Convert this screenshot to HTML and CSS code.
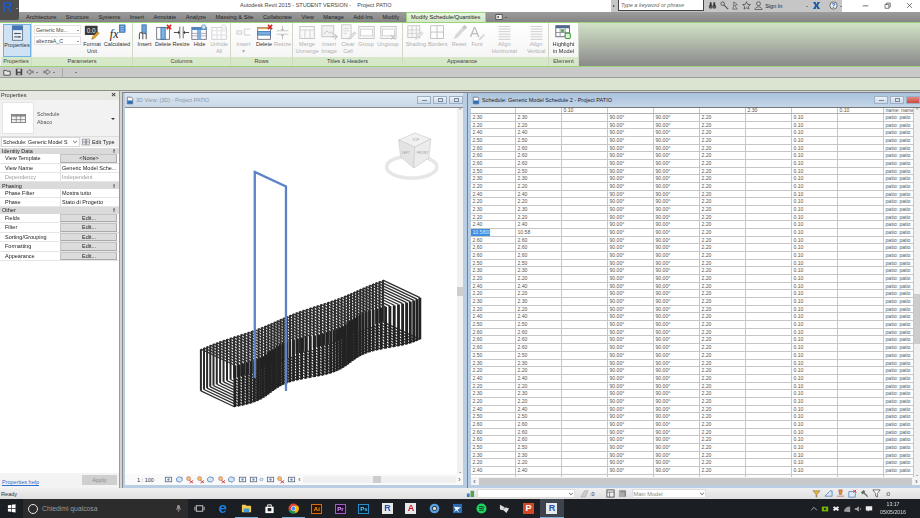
FILE: index.html
```html
<!DOCTYPE html>
<html lang="en">
<head>
<meta charset="utf-8">
<title>Autodesk Revit 2015 - Project PATIO</title>
<link rel="stylesheet" href="styles.css">
</head>
<body>
<svg class="sprite" aria-hidden="true">
  <symbol id="i-doc" viewBox="0 0 12 12"><path d="M2 1h6l2 2v8H2z" fill="#fff" stroke="#556"/><rect x="2" y="6" width="8" height="5" fill="#2f6fb5"/></symbol>
  <symbol id="i-props" viewBox="0 0 20 20"><rect x="4" y="1" width="12" height="17" fill="#e8eef5" stroke="#5b6f85"/><rect x="4" y="1" width="12" height="5" fill="#3f78b5"/><path d="M6 10h8M6 14h8" stroke="#333"/><path d="M8 9v2M12 13v2" stroke="#2a6ab0" stroke-width="1.5"/></symbol>
  <symbol id="i-fmt" viewBox="0 0 20 20"><rect x="1" y="2" width="15" height="11" rx="1" fill="#3a3a3a"/><text x="8.5" y="10.5" font-size="7.5" fill="#eee" text-anchor="middle" font-family="Liberation Sans">0.0</text><path d="M9 18l1-3 6-6 2 2-6 6z" fill="#e0a030" stroke="#8a5a10" stroke-width=".5"/></symbol>
  <symbol id="i-calc" viewBox="0 0 20 20"><text x="1" y="16" font-size="14" font-style="italic" fill="#222" font-family="Liberation Serif">fx</text><rect x="12" y="1" width="7" height="9" fill="#4a8ac8" stroke="#2a5a90" stroke-width=".5"/><path d="M13.5 3h4M13.5 5.5h4M13.5 8h4" stroke="#fff" stroke-width=".6"/></symbol>
  <symbol id="i-colins" viewBox="0 0 20 20"><rect x="7" y="1" width="5" height="10" fill="#6aa5de" stroke="#3a6ea5"/><path d="M4 18v-6a2 2 0 0 1 4 0v6M12 18v-6a2 2 0 0 0-2-1" fill="none" stroke="#555" stroke-width="1.2"/></symbol>
  <symbol id="i-coldel" viewBox="0 0 20 20"><rect x="2" y="4" width="15" height="14" fill="#fff" stroke="#667"/><rect x="7" y="4" width="5" height="14" fill="#7fb2e5" stroke="#3a6ea5"/><path d="M14 1l5 5M19 1l-5 5" stroke="#d8261c" stroke-width="1.8"/></symbol>
  <symbol id="i-colres" viewBox="0 0 20 20"><path d="M8 3v14M12 3v14" stroke="#555"/><path d="M1 10h5M19 10h-5" stroke="#333"/><path d="M6 8v4l2-2zM14 8v4l-2-2z" fill="#222"/></symbol>
  <symbol id="i-colhide" viewBox="0 0 20 20"><rect x="1" y="4" width="17" height="14" fill="#fff" stroke="#667"/><rect x="1" y="4" width="17" height="3" fill="#4a86c5"/><rect x="7" y="7" width="5" height="11" fill="#7fb2e5"/><path d="M1 11h17M1 14h17" stroke="#99a"/><circle cx="15" cy="3.5" r="2.6" fill="#cfe3f6" stroke="#6a9ac8"/></symbol>
  <symbol id="i-colun" viewBox="0 0 20 20"><rect x="1" y="4" width="17" height="14" fill="#fff" stroke="#778"/><path d="M1 8h17M7 4v14M12 4v14M1 13h17" stroke="#99a"/><circle cx="15" cy="3.5" r="2.6" fill="#eee" stroke="#999"/></symbol>
  <symbol id="i-rowins" viewBox="0 0 20 20"><path d="M2 8h6v4H2zM11 6h7M11 13h7M11 6v7" fill="#ddd" stroke="#777"/></symbol>
  <symbol id="i-rowdel" viewBox="0 0 20 20"><rect x="2" y="4" width="15" height="14" fill="#fff" stroke="#667"/><rect x="2" y="9" width="15" height="4" fill="#7fb2e5" stroke="#3a6ea5"/><rect x="2" y="4" width="15" height="2" fill="#d9a860"/><path d="M14 1l5 5M19 1l-5 5" stroke="#d8261c" stroke-width="1.8"/></symbol>
  <symbol id="i-rowres" viewBox="0 0 20 20"><path d="M3 8h14M3 12h14" stroke="#555"/><path d="M10 2v4M10 18v-4" stroke="#333"/><path d="M8 6h4l-2 2zM8 14h4l-2-2z" fill="#222"/></symbol>
  <symbol id="i-merge" viewBox="0 0 20 20"><rect x="1" y="3" width="17" height="14" fill="#f4f4f4" stroke="#555"/><path d="M1 7h17M7 7v10M13 7v10" stroke="#777"/></symbol>
  <symbol id="i-insimg" viewBox="0 0 20 20"><rect x="1" y="2" width="14" height="13" fill="#ddd" stroke="#555"/><path d="M3 12l4-4 3 3 2-2 2 3" fill="none" stroke="#555"/><path d="M12 15h7M16 12l3 3-3 3" fill="none" stroke="#555" stroke-width="1.3"/></symbol>
  <symbol id="i-clear" viewBox="0 0 20 20"><rect x="2" y="1" width="11" height="16" fill="#eee" stroke="#555"/><path d="M4 5h7M4 8h7M4 11h4" stroke="#777"/><path d="M10 18l2-4 5-5 2 2-5 5z" fill="#aaa" stroke="#555" stroke-width=".6"/></symbol>
  <symbol id="i-group" viewBox="0 0 20 20"><rect x="1" y="3" width="18" height="14" fill="#f4f4f4" stroke="#555"/><rect x="3" y="6" width="14" height="8" fill="#fff" stroke="#777"/></symbol>
  <symbol id="i-ungroup" viewBox="0 0 20 20"><rect x="1" y="3" width="18" height="14" fill="#f4f4f4" stroke="#555"/><rect x="3" y="6" width="14" height="8" fill="#fff" stroke="#777"/><path d="M13 13l5 5M18 13l-5 5" stroke="#555" stroke-width="1.2"/></symbol>
  <symbol id="i-shade" viewBox="0 0 20 20"><rect x="1" y="2" width="14" height="14" fill="#f2f2f2" stroke="#555"/><path d="M1 7h14M1 11h14M6 2v14M11 2v14" stroke="#777"/><path d="M10 18l2-4 5-5 2 2-5 5z" fill="#bbb" stroke="#555" stroke-width=".6"/></symbol>
  <symbol id="i-border" viewBox="0 0 20 20"><rect x="2" y="2" width="15" height="15" fill="#fff" stroke="#444"/><path d="M2 9.5h15M9.5 2v15" stroke="#444"/></symbol>
  <symbol id="i-reset" viewBox="0 0 20 20"><path d="M3 18l2-5 8-9 3 3-8 9z" fill="#999"/><path d="M13 4l3-3 3 3-3 3z" fill="#666"/></symbol>
  <symbol id="i-font" viewBox="0 0 20 20"><text x="1" y="15" font-size="17" fill="#444" font-family="Liberation Sans">A</text><path d="M11 18l6-6 2 1-6 6z" fill="#999"/></symbol>
  <symbol id="i-align" viewBox="0 0 20 20"><path d="M3 3h14M3 6h14M3 9h14M3 12h14M3 15h14M3 18h14" stroke="#666"/></symbol>
  <symbol id="i-high" viewBox="0 0 20 20"><rect x="1" y="2" width="16" height="13" fill="#fff" stroke="#556"/><rect x="1" y="2" width="16" height="3" fill="#4a6a90"/><path d="M1 10h16M6 5v10M12 5v10" stroke="#889"/><rect x="7" y="6" width="4" height="4" fill="#5fb35f"/><rect x="12" y="11" width="6" height="6" rx="1" fill="#dff0d8" stroke="#3e9e3e" stroke-width="1.2"/></symbol>
  <symbol id="i-table" viewBox="0 0 20 12"><rect x=".5" y=".5" width="19" height="11" fill="#f4f4f4" stroke="#666"/><rect x=".5" y=".5" width="19" height="3" fill="#8d8d8d"/><path d="M.5 7.5h19M7 .5v11M13 .5v11" stroke="#777"/></symbol>
  <symbol id="i-mini" viewBox="0 0 10 10"><rect x="1.500" y="2.500" width="7" height="5" fill="none" stroke="#5a6a80" stroke-width=".9"/><circle cx="5" cy="5" r="1.300" fill="#6d92bf"/></symbol>
  <symbol id="i-mini2" viewBox="0 0 10 10"><path d="M1.500 4l2.500-2 4 1v3L6 8 2 7z" fill="#dbe6f2" stroke="#3f76b8" stroke-width=".8"/></symbol>
  <symbol id="i-red" viewBox="0 0 10 10"><circle cx="4" cy="4" r="2.300" fill="#eec36a" stroke="#a57" stroke-width=".5"/><path d="M5 6l4 3M9 6l-4 3" stroke="#c22" stroke-width=".9"/></symbol>
  <symbol id="i-filter" viewBox="0 0 10 10"><path d="M1 1h8L6 5v4L4 8V5z" fill="#fff" stroke="#444" stroke-width=".8"/></symbol>
  <symbol id="i-file" viewBox="0 0 10 10"><path d="M1 3h3l1 1h4v5H1z" fill="#e8e8e8" stroke="#333"/></symbol>
  <symbol id="i-save" viewBox="0 0 10 10"><rect x="1" y="1" width="8" height="8" fill="#444"/><rect x="3" y="1.5" width="4" height="3" fill="#ddd"/><rect x="3" y="6" width="4" height="3" fill="#aaa"/></symbol>
  <symbol id="i-undo" viewBox="0 0 10 10"><path d="M1 5l4-3v2h4v2H5v2z" fill="#ddd" stroke="#444" stroke-width=".8"/></symbol>
  <symbol id="i-redo" viewBox="0 0 10 10"><path d="M9 5L5 2v2H1v2h4v2z" fill="#ddd" stroke="#444" stroke-width=".8"/></symbol>
</svg>

<div class="app">
  <div class="app-button"><span class="app-r">R</span><span class="app-caret"></span></div>

  <header class="titlebar">
    <div class="title-text">Autodesk Revit 2015 - STUDENT VERSION - &nbsp; &nbsp;Project PATIO</div>
    <div class="infocenter">
      <span class="ic-arrow"></span>
      <span class="ic-search">Type a keyword or phrase</span>
      <svg class="ic-icon" viewBox="0 0 10 10"><circle cx="3" cy="6.5" r="2.2" fill="#555"/><circle cx="7" cy="6.5" r="2.2" fill="#555"/><rect x="2" y="1.5" width="2" height="4" fill="#333"/><rect x="6" y="1.5" width="2" height="4" fill="#333"/></svg>
      <svg class="ic-icon" viewBox="0 0 10 10"><circle cx="3" cy="3" r="2" fill="none" stroke="#555"/><path d="M4.5 4.5L9 9" stroke="#555" stroke-width="1.2"/></svg>
      <svg class="ic-icon" viewBox="0 0 10 10"><path d="M3 1l4 3-3 1 3 4H2l1-4z" fill="none" stroke="#555" stroke-width=".8"/></svg>
      <svg class="ic-icon" viewBox="0 0 10 10"><path d="M5 .8l1.3 2.9 3 .3-2.3 2 .7 3L5 7.500 2.300 9l.7-3-2.300-2 3-.3z" fill="none" stroke="#444" stroke-width=".8"/></svg>
      <svg class="ic-icon ic-user" viewBox="0 0 10 10"><circle cx="5" cy="3" r="2.200" fill="none" stroke="#444" stroke-width=".8"/><path d="M1 9.500c.5-4 7.500-4 8 0z" fill="none" stroke="#444" stroke-width=".8"/></svg>
      <span class="ic-sign">Sign In</span>
      <span class="ic-down"></span>
      <svg class="ic-icon ic-x" viewBox="0 0 10 10"><path d="M1 1h3l1 3 1-3h3L6.500 5 9 9H6L5 6 4 9H1l2.500-4z" fill="#1d5aa8"/></svg>
      <svg class="ic-icon ic-help" viewBox="0 0 10 10"><circle cx="5" cy="5" r="4" fill="#e8f0f8" stroke="#444" stroke-width=".8"/><text x="5" y="7.500" font-size="7" font-weight="700" fill="#1d5aa8" text-anchor="middle" font-family="Liberation Sans">?</text></svg>
      <span class="ic-down"></span>
    </div>
    <div class="win-controls">
      <svg class="win-btn" viewBox="0 0 10 10"><path d="M1 5.500h8" stroke="#333"/></svg>
      <svg class="win-btn" viewBox="0 0 10 10"><path d="M1.500 3.500h5.500v5.500H1.500zM3.500 3.500V1.500H9v5.500H7" fill="none" stroke="#333" stroke-width=".9"/></svg>
      <svg class="win-btn" viewBox="0 0 10 10"><path d="M1.500 1.500l7 7M8.500 1.500l-7 7" stroke="#333" stroke-width=".9"/></svg>
    </div>
  </header>

  <nav class="tabs">
    <span class="tab">Architecture</span>
    <span class="tab">Structure</span>
    <span class="tab">Systems</span>
    <span class="tab">Insert</span>
    <span class="tab">Annotate</span>
    <span class="tab">Analyze</span>
    <span class="tab">Massing &amp; Site</span>
    <span class="tab">Collaborate</span>
    <span class="tab">View</span>
    <span class="tab">Manage</span>
    <span class="tab">Add-Ins</span>
    <span class="tab">Modify</span>
    <span class="tab tab-active">Modify Schedule/Quantities</span>
    <span class="tab-extra"><svg class="tab-extra-icon" viewBox="0 0 10 10"><rect x="1" y="2" width="8" height="6" fill="#eee" stroke="#444"/><rect x="3" y="4" width="2" height="2" fill="#444"/></svg><i class="tab-caret"></i></span>
  </nav>

  <section class="ribbon">
    <div class="panel p-properties">
      <div class="panel-body">
        <div class="btn btn-on w-prop"><svg class="ri"><use href="#i-props"/></svg><span>Properties</span></div>
      </div>
      <div class="panel-label">Properties</div>
    </div>
    <div class="panel p-parameters">
      <div class="panel-body">
        <div class="combos">
          <div class="r-combo"><span>Generic Mo...</span><i class="mini-caret"></i></div>
          <div class="r-combo"><span>altezzaA_C</span><i class="mini-caret"></i></div>
        </div>
        <div class="btn w-20"><svg class="ri"><use href="#i-fmt"/></svg><span>Format<br>Unit</span></div>
        <div class="btn w-30"><svg class="ri"><use href="#i-calc"/></svg><span>Calculated</span></div>
      </div>
      <div class="panel-label">Parameters</div>
    </div>
    <div class="panel p-columns">
      <div class="panel-body">
        <div class="btn w-19"><svg class="ri"><use href="#i-colins"/></svg><span>Insert</span></div>
        <div class="btn w-18"><svg class="ri"><use href="#i-coldel"/></svg><span>Delete</span></div>
        <div class="btn w-18"><svg class="ri"><use href="#i-colres"/></svg><span>Resize</span></div>
        <div class="btn w-19"><svg class="ri"><use href="#i-colhide"/></svg><span>Hide</span></div>
        <div class="btn w-20 off"><svg class="ri"><use href="#i-colun"/></svg><span>Unhide<br>All</span></div>
      </div>
      <div class="panel-label">Columns</div>
    </div>
    <div class="panel p-rows">
      <div class="panel-body">
        <div class="btn w-21 off"><svg class="ri"><use href="#i-rowins"/></svg><span>Insert<br>▾</span></div>
        <div class="btn w-20"><svg class="ri"><use href="#i-rowdel"/></svg><span>Delete</span></div>
        <div class="btn w-17 off"><svg class="ri"><use href="#i-rowres"/></svg><span>Resize</span></div>
      </div>
      <div class="panel-label">Rows</div>
    </div>
    <div class="panel p-titles">
      <div class="panel-body">
        <div class="btn w-24 off"><svg class="ri"><use href="#i-merge"/></svg><span>Merge<br>Unmerge</span></div>
        <div class="btn w-20 off"><svg class="ri"><use href="#i-insimg"/></svg><span>Insert<br>Image</span></div>
        <div class="btn w-18 off"><svg class="ri"><use href="#i-clear"/></svg><span>Clear<br>Cell</span></div>
        <div class="btn w-18 off"><svg class="ri"><use href="#i-group"/></svg><span>Group</span></div>
        <div class="btn w-26 off"><svg class="ri"><use href="#i-ungroup"/></svg><span>Ungroup</span></div>
      </div>
      <div class="panel-label">Titles &amp; Headers</div>
    </div>
    <div class="panel p-appearance">
      <div class="panel-body">
        <div class="btn w-22 off"><svg class="ri"><use href="#i-shade"/></svg><span>Shading</span></div>
        <div class="btn w-22 off"><svg class="ri"><use href="#i-border"/></svg><span>Borders</span></div>
        <div class="btn w-21 off"><svg class="ri"><use href="#i-reset"/></svg><span>Reset</span></div>
        <div class="btn w-15 off"><svg class="ri"><use href="#i-font"/></svg><span>Font</span></div>
        <div class="btn w-40 off"><svg class="ri"><use href="#i-align"/></svg><span>Align<br>Horizontal</span></div>
        <div class="btn w-24 off"><svg class="ri"><use href="#i-align"/></svg><span>Align<br>Vertical</span></div>
      </div>
      <div class="panel-label panel-label-left">Appearance</div>
    </div>
    <div class="panel p-element">
      <div class="panel-body">
        <div class="btn w-30"><svg class="ri"><use href="#i-high"/></svg><span>Highlight<br>in Model</span></div>
      </div>
      <div class="panel-label">Element</div>
    </div>
    <div class="ribbon-fill"></div>
  </section>

  <div class="qat">
    <svg class="qi"><use href="#i-file"/></svg>
    <svg class="qi"><use href="#i-save"/></svg>
    <svg class="qi"><use href="#i-undo"/></svg><i class="qat-caret"></i>
    <svg class="qi"><use href="#i-redo"/></svg><i class="qat-caret"></i>
    <span class="qat-sep"></span>
    <i class="qat-caret qat-last"></i>
  </div>
  <div class="optionsbar"></div>

  <main class="workspace">
    <aside class="props">
      <div class="props-head"><span>Properties</span><span class="props-x">×</span></div>
      <div class="type-sel">
        <div class="thumb"><svg class="thumb-icon"><use href="#i-table"/></svg></div>
        <div class="type-text">Schedule<br>Abaco</div>
        <i class="type-caret"></i>
      </div>
      <div class="inst-row">
        <div class="inst-combo"><span>Schedule: Generic Model S</span><i class="chev"></i></div>
        <div class="edit-type"><svg class="edit-icon" viewBox="0 0 10 10"><path d="M.5 1.500h4v7h-4zM5.500 1.500h4v7h-4zM.5 4h4M.5 6h4M5.500 4h4M5.500 6h4" fill="#fff" stroke="#667" stroke-width=".7"/></svg>Edit Type</div>
      </div>
      <div class="plist">
        <div class="sec"><span>Identity Data</span><b>⇑</b></div>
        <div class="prow"><span>View Template</span><span class="pval pbtn">&lt;None&gt;</span></div>
        <div class="prow"><span>View Name</span><span class="pval">Generic Model Sche...</span></div>
        <div class="prow pdis"><span>Dependency</span><span class="pval">Independent</span></div>
        <div class="sec"><span>Phasing</span><b>⇑</b></div>
        <div class="prow"><span>Phase Filter</span><span class="pval">Mostra tutto</span></div>
        <div class="prow"><span>Phase</span><span class="pval">Stato di Progetto</span></div>
        <div class="sec"><span>Other</span><b>⇑</b></div>
        <div class="prow"><span>Fields</span><span class="pval pbtn">Edit...</span></div>
        <div class="prow"><span>Filter</span><span class="pval pbtn">Edit...</span></div>
        <div class="prow"><span>Sorting/Grouping</span><span class="pval pbtn">Edit...</span></div>
        <div class="prow"><span>Formatting</span><span class="pval pbtn">Edit...</span></div>
        <div class="prow"><span>Appearance</span><span class="pval pbtn">Edit...</span></div>
      </div>
      <div class="props-foot"><a class="props-help">Properties help</a><span class="apply">Apply</span></div>
    </aside>

    <section class="win win-3d">
      <div class="win-title win-title-dim">
        <svg class="win-doc"><use href="#i-doc"/></svg><span>3D View: {3D} - Project PATIO</span>
        <div class="win-btns"><i class="wb"><em class="wb-min"></em></i><i class="wb"><em class="wb-res"></em></i><i class="wb"><em class="wb-res"></em></i></div>
      </div>
      <div class="win-body">
        <div class="canvas3d">
          <svg class="model" viewBox="126 107 330 366" preserveAspectRatio="none">
            <g id="fins"></g>
            <path d="M255 377V171L286 185.500V390" fill="none" stroke="#5d82c8" stroke-width="2.300"/>
            <g class="cube">
              <ellipse cx="411" cy="166" rx="25" ry="11" fill="none" stroke="#e6e6e6" stroke-width="3.500"/>
              <path d="M398 139l16-7 16 6-16 8z" fill="#f1f1f1" stroke="#c8c8c8" stroke-width=".6"/>
              <path d="M398 139l16 7-1 21-13-11z" fill="#e4e4e4" stroke="#c8c8c8" stroke-width=".6"/>
              <path d="M414 146l16-8-2 19-15 10z" fill="#ececec" stroke="#c8c8c8" stroke-width=".6"/>
              <text x="415" y="140" class="cube-t">TOP</text>
              <text x="405" y="153" class="cube-t">LEFT</text>
              <text x="422" y="153" class="cube-t">FRONT</text>
            </g>
          </svg>
          <div class="vscroll"><i class="up">⌃</i><i class="vthumb vthumb-3d"></i><i class="dn">⌄</i></div>
        </div>
        <div class="viewbar">
          <span class="scale">1 : 100</span>
          <div class="vb-icons">
            <svg class="vi"><use href="#i-mini"/></svg><svg class="vi"><use href="#i-mini2"/></svg><svg class="vi"><use href="#i-red"/></svg><svg class="vi"><use href="#i-red"/></svg><svg class="vi"><use href="#i-mini2"/></svg><svg class="vi"><use href="#i-red"/></svg><svg class="vi"><use href="#i-mini2"/></svg><svg class="vi"><use href="#i-mini"/></svg><svg class="vi"><use href="#i-mini"/></svg><svg class="vi vi-small"><use href="#i-mini2"/></svg><svg class="vi"><use href="#i-mini"/></svg><svg class="vi"><use href="#i-red"/></svg><svg class="vi"><use href="#i-mini"/></svg>
          </div>
          <span class="hs-arrow">‹</span>
          <div class="vb-track"><i class="vb-thumb"></i></div>
          <span class="hs-arrow">›</span>
        </div>
      </div>
    </section>

    <section class="win win-sched">
      <div class="win-title">
        <svg class="win-doc"><use href="#i-doc"/></svg><span>Schedule: Generic Model Schedule 2 - Project PATIO</span>
        <div class="win-btns"><i class="wb"><em class="wb-min"></em></i><i class="wb"><em class="wb-res"></em></i><i class="wb wb-close"></i></div>
      </div>
      <div class="sched-body">
        <div class="sched-main">
          <div class="sched-table" id="rows">
            <div class="srow shead"><span></span><span></span><span>0.10</span><span></span><span></span><span></span><span>2.30</span><span></span><span>0.10</span><span>name: name</span></div>
          </div>
          <div class="vscroll vscroll-s"><i class="up">⌃</i><i class="vthumb vthumb-s"></i><i class="dn">⌄</i></div>
        </div>
        <div class="hscroll"><span class="hs-arrow">‹</span><div class="hs-track"></div><span class="hs-arrow">›</span></div>
      </div>
    </section>
  </main>

  <footer class="status">
    <span class="ready">Ready</span>
    <svg class="st-icon st-first" viewBox="0 0 10 10"><rect x="1" y="5" width="3" height="4" fill="#3a7ac0"/><rect x="5" y="2" width="4" height="7" fill="#5aa05a"/></svg>
    <div class="st-combo st-wide"><i class="chev"></i></div>
    <svg class="st-icon st-gap" viewBox="0 0 10 10"><path d="M1 9l4-7 4 0-3 7z" fill="#ccc" stroke="#999" stroke-width=".5"/></svg>
    <span class="st-num">:0</span>
    <svg class="st-icon st-gap2" viewBox="0 0 10 10"><rect x="1" y="1" width="8" height="8" fill="#eee" stroke="#555"/><path d="M1 3.500h8M4 3.500v5.500" stroke="#555" stroke-width=".7"/></svg>
    <svg class="st-icon st-gap3" viewBox="0 0 10 10"><rect x="1" y="1" width="8" height="8" fill="#aaa"/><path d="M3 3h5v5" fill="none" stroke="#777"/></svg>
    <div class="st-combo st-model"><span>Main Model</span><i class="chev"></i></div>
    <div class="st-right">
      <svg class="st-icon" viewBox="0 0 10 10"><path d="M1 2h8L5.500 6v3h-1V6z" fill="#e8b830" stroke="#766" stroke-width=".6"/></svg>
      <svg class="st-icon" viewBox="0 0 10 10"><path d="M1 8l6-6 2 0v6z" fill="#dfe8f4" stroke="#2a68b0" stroke-width=".7"/></svg>
      <svg class="st-icon" viewBox="0 0 10 10"><path d="M3 1h4l-1 5H4zM1 8h8" fill="#e89030" stroke="#a55" stroke-width=".7"/></svg>
      <svg class="st-icon" viewBox="0 0 10 10"><rect x="1" y="3" width="7" height="6" fill="#dfe8f4" stroke="#2a68b0" stroke-width=".7"/><path d="M6 1l3 3M9 1L6 4" stroke="#d22" stroke-width="1"/></svg>
      <svg class="st-icon" viewBox="0 0 10 10"><path d="M1 4l3-3 2 2-1 1 4 4-1 1-4-4-1 1z" fill="#666"/></svg>
      <svg class="st-icon" viewBox="0 0 10 10"><use href="#i-filter"/></svg><span class="st-num">:0</span>
    </div>
  </footer>

  <div class="taskbar">
    <div class="tb-start"><svg class="tb-win" viewBox="0 0 10 10"><path d="M1 1.500l3.500-.5v3.500H1zM5.200.9L9.500.3v4.200H5.200zM1 5.200h3.500v3.500L1 8.200zM5.200 5.200h4.300v4.200l-4.300-.6z" fill="#fff"/></svg></div>
    <div class="tb-search"><i class="cortana"></i><span>Chiedimi qualcosa</span><svg class="tb-mic" viewBox="0 0 10 10"><rect x="3.500" y="1" width="3" height="5" rx="1.500" fill="#999"/><path d="M2.500 4.500a2.500 2.500 0 0 0 5 0M5 7v2" fill="none" stroke="#999" stroke-width=".7"/></svg></div>
    <div class="tb-item"><svg class="tb-icon" viewBox="0 0 12 12"><rect x="2.500" y="3" width="7" height="6" fill="none" stroke="#ccc"/><path d="M1 4v4M11 4v4" stroke="#ccc"/></svg></div>
    <div class="tb-item"><span class="tb-edge">e</span></div>
    <div class="tb-item tb-open"><svg class="tb-icon" viewBox="0 0 12 12"><path d="M1 2h4l1 1h5v7H1z" fill="#f2c94c"/><rect x="3" y="6" width="6" height="4" fill="#3f9ad6"/></svg></div>
    <div class="tb-item"><svg class="tb-icon" viewBox="0 0 12 12"><path d="M1.500 4h9v7h-9z" fill="#fff"/><path d="M4 4V2h4v2" fill="none" stroke="#fff"/><rect x="4" y="5.500" width="4" height="3.500" fill="#222"/></svg></div>
    <div class="tb-item tb-open"><svg class="tb-icon" viewBox="0 0 12 12"><circle cx="6" cy="6" r="5.500" fill="#db4437"/><path d="M6 6L1 8.800A5.500 5.500 0 0 0 8 11.200z" fill="#0f9d58"/><path d="M6 3h5a5.500 5.500 0 0 1-3 8.200z" fill="#f4b400"/><circle cx="6" cy="6" r="2.400" fill="#4285f4" stroke="#fff" stroke-width=".7"/></svg></div>
    <div class="tb-item"><span class="tb-app tb-ai">Ai</span></div>
    <div class="tb-item"><span class="tb-app tb-pr">Pr</span></div>
    <div class="tb-item"><span class="tb-app tb-ps">Ps</span></div>
    <div class="tb-item"><span class="tb-tile tb-r">R</span></div>
    <div class="tb-item"><span class="tb-tile tb-a">A</span></div>
    <div class="tb-item"><svg class="tb-icon" viewBox="0 0 12 12"><circle cx="6" cy="6" r="4" fill="none" stroke="#5aa0e0" stroke-width="2.600"/><circle cx="6" cy="6" r="1.800" fill="#ddd"/></svg></div>
    <div class="tb-item"><svg class="tb-icon" viewBox="0 0 12 12"><rect x="1" y="1" width="10" height="10" fill="#2a6ab0"/><path d="M2 4l8 1-4 2 2 4-3-3-3 2 2-3z" fill="#fff"/></svg></div>
    <div class="tb-item"><svg class="tb-icon" viewBox="0 0 12 12"><circle cx="6" cy="6" r="5.500" fill="#1ed760"/><path d="M3 4.300c2-.6 4.500-.4 6.200.6M3.400 6.200c1.700-.5 3.700-.3 5.200.5M3.800 8c1.400-.4 3-.2 4.200.4" fill="none" stroke="#111" stroke-width=".9"/></svg></div>
    <div class="tb-item"><svg class="tb-icon" viewBox="0 0 12 12"><path d="M1 2l4 2 6 2-3 5-3-3-4-1z" fill="#ddd"/><path d="M5 6l4-3" stroke="#333"/></svg></div>
    <div class="tb-item"><span class="tb-tile tb-p">P</span></div>
    <div class="tb-item tb-active"><span class="tb-tile tb-r">R</span></div>
    <div class="tb-tray">
      <svg class="tray" viewBox="0 0 10 10"><path d="M1.500 6.500L5 3l3.500 3.500" fill="none" stroke="#ccc"/></svg>
      <svg class="tray" viewBox="0 0 10 10"><rect x="1" y="2" width="8" height="6" fill="#76b900"/><circle cx="5" cy="5" r="1.500" fill="#234"/></svg>
      <svg class="tray" viewBox="0 0 10 10"><path d="M1 3l2-1.500L5 3 7 1.500 9 3 7 4.500 9 6 7 7.500 5 6 3 7.500 1 6l2-1.500z" fill="#eee"/></svg>
      <svg class="tray" viewBox="0 0 10 10"><path d="M1 8a8 8 0 0 1 8-6v7z" fill="#999"/></svg>
      <svg class="tray" viewBox="0 0 10 10"><path d="M1 4h2l3-2.500v7L3 6H1z" fill="#aaa"/><path d="M7.500 3.500c1 1 1 2 0 3" fill="none" stroke="#aaa"/></svg>
      <svg class="tray" viewBox="0 0 10 10"><path d="M1 1.500h8v5.500H5L3.500 8.500V7H1z" fill="#eee"/></svg>
      <div class="clock"><span>13:17</span><span>05/05/2016</span></div>
    </div>
  </div>
</div>
<script src="app.js"></script>
</body>
</html>
```

FILE: styles.css
```css
* { box-sizing: border-box; }
html, body { margin: 0; padding: 0; background: #fff; }
.sprite { display: none; }
.app {
  position: relative; width: 920px; height: 518px; overflow: hidden;
  display: flex; flex-direction: column;
  font-family: "Liberation Sans", Arial, sans-serif; font-size: 5.8px; color: #333;
  filter: blur(.3px);
}
.app > * { min-height: 0; }
i, em { font-style: normal; display: block; }

/* app button */
.app-button { position: absolute; left: 0; top: 0; width: 19px; height: 20px; background: #4d4d4d; z-index: 3; border-bottom-right-radius: 2px; }
.app-r { position: absolute; left: 3px; top: 0; font: 700 14px/15px "Liberation Sans", sans-serif; color: #2456b8; }
.app-caret { position: absolute; right: 1px; top: 8px; border: 1.500px solid transparent; border-top-color: #ddd; }

/* title bar */
.titlebar { flex: 0 0 12px; display: flex; background: #fff; }
.title-text { flex: 0 0 611px; padding-left: 240px; font-size: 5.500px; line-height: 11px; white-space: nowrap; color: #444; }
.infocenter { flex: 0 0 230px; height: 11.500px; display: flex; align-items: center; background: #c6c6c6; }
.ic-arrow { width: 7px; border: 1.500px solid transparent; border-left: 2px solid #333; margin-left: 2px; flex: 0 0 5px; }
.ic-search { width: 86px; height: 11px; margin-right: 2px; padding-left: 2px; background: #fff; border: 1px solid #444; border-top: 0; font: italic 5.500px/10px "Liberation Sans", sans-serif; color: #666; }
.ic-icon { width: 9px; height: 9px; margin-left: 2.300px; }
.ic-user { margin-left: 3px; }
.ic-sign { margin-left: 2px; width: 24px; font-weight: 400; color: #222; font-size: 5.500px; }
.ic-down { border: 1.500px solid transparent; border-top-color: #444; margin: 2px 0 0 17px; }
.ic-x { margin-left: 4px; }
.ic-help { margin-left: 8px; }
.ic-help + .ic-down { margin-left: 2px; }
.win-controls { flex: 1; display: flex; justify-content: space-around; align-items: center; height: 11px; padding-left: 12px; }
.win-btn { width: 7px; height: 7px; }

/* tabs */
.tabs { flex: 0 0 10px; display: flex; align-items: stretch; padding-left: 26px; gap: 9.500px; background: linear-gradient(#9c9c9c, #858585); white-space: nowrap; line-height: 10px; color: #222; }
.tab { font-size: 5.700px; }
.tab-active { width: 80px; margin-left: -3px; padding: 0 2px; background: linear-gradient(#e6f3dd, #d3e8c6); border: 1px solid #9bd27c; border-bottom: 0; line-height: 8.500px; text-align: center; }
.tab-extra { display: flex; align-items: center; margin-left: 0; gap: 2px; }
.tab-extra-icon { width: 8px; height: 8px; }
.tab-caret { border: 1.500px solid transparent; border-top-color: #222; margin-top: 2px; }

/* ribbon */
.ribbon { flex: 0 0 45px; display: flex; background: #f2f2f2; border-top: 1px solid #9bd27c; border-bottom: 1px solid #9bd27c; }
.panel { display: flex; flex-direction: column; border-right: 1px solid #cfd9c6; background: linear-gradient(#fff, #f3f3f3); }
.panel-body { flex: 1; display: flex; padding-left: 2px; }
.panel-label { flex: 0 0 9px; background: #d6e8c8; text-align: center; font-size: 5.600px; line-height: 9px; color: #444; }
.panel-label-left { text-align: left; padding-left: 44px; }
.p-properties { width: 32px; padding-left: 1px; background: #f4f4f4; }
.p-parameters { width: 101px; }
.p-columns { width: 98px; }
.p-rows { width: 62px; }
.p-titles { width: 110px; }
.p-appearance { width: 146px; }
.p-element { width: 30px; }
.p-element .panel-body { padding-left: 0; }
.ribbon-fill { flex: 1; background: linear-gradient(#d2e2c6, #8a8a8a); }
.btn { display: flex; flex-direction: column; align-items: center; padding-top: 1px; text-align: center; font-size: 5.600px; line-height: 7.300px; white-space: nowrap; color: #333; }
.btn span { display: block; }
.btn.off { color: #b0b0b0; }
.btn.off .ri { opacity: .35; }
.ri { width: 17px; height: 17px; flex: 0 0 17px; }
.btn-on { background: #cfe3f5; border: 1px solid #6fb1e6; margin-top: 1px; padding-top: 0; height: 33px; }
.w-prop { width: 28px; }
.w-15 { width: 15px; } .w-17 { width: 17px; } .w-18 { width: 18px; } .w-19 { width: 19px; }
.w-20 { width: 20px; } .w-21 { width: 21px; } .w-22 { width: 22px; } .w-24 { width: 24px; }
.w-26 { width: 26px; } .w-30 { width: 30px; } .w-40 { width: 40px; }
.combos { width: 47px; margin-right: 1px; padding-top: 2px; display: flex; flex-direction: column; gap: 2px; }
.r-combo { height: 9px; display: flex; align-items: center; justify-content: space-between; padding: 0 1px; background: #fff; border: 1px solid #e2e2e2; font-size: 5.300px; color: #444; }
.mini-caret { border: 1.500px solid transparent; border-top-color: #333; margin-top: 2px; }

/* qat + options */
.qat { flex: 0 0 11px; display: flex; align-items: center; padding-left: 1px; gap: 1.500px; background: #c9c9c9; border-bottom: 1px solid #9d9d9d; }
.qi { width: 8px; height: 8px; margin-left: 2px; }
.qat-caret { border: 1.300px solid transparent; border-top-color: #333; margin: 2px 2px 0 0; }
.qat-sep { width: 1px; height: 9px; margin: 0 8px 0 4px; background: #aaa; }
.qat-last { margin-left: 2px; }
.optionsbar { flex: 0 0 13px; background: #dae4d0; border-bottom: 1px solid #8b8f84; }

/* workspace */
.workspace { flex: 0 0 397px; height: 397px; display: flex; background: #d3d3d3; overflow: hidden; }

/* properties palette */
.props { flex: 0 0 120px; display: flex; flex-direction: column; background: #fff; border-right: 1px solid #9a9a9a; }
.props-head { flex: 0 0 9px; display: flex; justify-content: space-between; padding: 0 3px 0 1px; background: #e6e8e2; font-size: 5.600px; line-height: 9px; }
.props-x { font-size: 8px; font-weight: 700; line-height: 8px; }
.type-sel { flex: 0 0 37px; display: flex; align-items: center; padding: 2px 4px 2px 2px; background: #f2f2f2; border-bottom: 1px solid #ddd; }
.thumb { width: 32px; height: 32px; display: flex; align-items: center; justify-content: center; background: #fff; border: 1px solid #e4e4e4; }
.thumb-icon { width: 15px; height: 9px; }
.type-text { margin-left: 3px; flex: 1; font-size: 5.400px; line-height: 8px; color: #555; }
.type-caret { border: 2px solid transparent; border-top-color: #333; margin-top: 3px; }
.inst-row { flex: 0 0 10px; display: flex; align-items: center; background: #f0f0f0; }
.inst-combo { width: 79px; height: 10px; margin-left: 1px; padding: 0 1px; display: flex; align-items: center; justify-content: space-between; background: #fff; border: 1px solid #d8d8d8; font-size: 5.300px; white-space: nowrap; overflow: hidden; color: #222; }
.chev { flex: 0 0 4px; width: 4px; height: 4px; margin: -2px 1px 0 1px; border-right: 1px solid #777; border-bottom: 1px solid #777; transform: rotate(45deg) scale(.8); }
.edit-type { display: flex; align-items: center; gap: 2px; margin-left: 2px; font-size: 5.400px; white-space: nowrap; color: #222; }
.edit-icon { width: 8px; height: 8px; }
.plist { flex: 0 0 113px; margin-top: 1px; font-size: 5.500px; display: flex; flex-direction: column; }
.sec { flex: 1; display: flex; justify-content: space-between; padding: 0 3px 0 2px; align-items: center; background: #dadada; color: #222; }
.sec b { font-size: 5px; font-weight: 400; }
.prow { flex: 1; display: grid; align-items: stretch; line-height: 8.400px; padding-left: 5px; grid-template-columns: 55px 57px; color: #222; border-bottom: 1px solid #e6e6e6; }
.pval { border-left: 1px solid #e0e0e0; padding-left: 1px; white-space: nowrap; overflow: hidden; }
.pbtn { background: #dcdcdc; border: 1px solid #c4c4c4; border-right-color: #aaa; border-bottom-color: #aaa; text-align: center; line-height: 6.500px; }
.pdis { color: #9a9a9a; }
.props-foot { margin-top: auto; flex: 0 0 15px; display: flex; justify-content: space-between; align-items: center; padding: 0 2px; background: #f3f3f3; }
.props-help { color: #2a70d0; text-decoration: underline; font-size: 5.500px; margin-top: 3px; }
.apply { width: 35px; height: 10px; margin-bottom: 1px; background: #cfcfcf; color: #8c8c8c; text-align: center; line-height: 10px; font-size: 5.800px; }

/* document windows */
.win { display: flex; flex-direction: column; min-height: 0; background: #b9cee3; border-top: 1px solid #7d8288; margin-top: 1px; padding-bottom: 3px; }
.win-3d { flex: 0 0 345px; margin-left: 2px; border-left: 1px solid #8b8b8b; padding-left: 2px; padding-right: 4px; }
.win-sched { flex: 1; min-width: 0; margin-left: 0; border-left: 1px solid #7f7f7f; padding-left: 3px; }
.win-title { flex: 0 0 14px; display: flex; align-items: center; gap: 2px; padding-left: 1px; background: linear-gradient(#a9c1dc, #c4d6e9); font-size: 5.500px; white-space: nowrap; color: #222; }
.win-title-dim { background: linear-gradient(#dbe6f1, #c9d8e8); color: #8a97a4; }
.win-doc { width: 8px; height: 9px; flex: 0 0 8px; }
.win-btns { margin-left: auto; display: flex; gap: 2px; padding-right: 0; }
.wb { width: 14px; height: 8px; display: flex; align-items: center; justify-content: center; background: linear-gradient(#eef3f9, #c8d7e7); border: 1px solid #9db0c4; }
.wb-min { width: 5px; height: 2px; border: 1px solid #7a8896; border-width: 0 0 1px; }
.wb-res { width: 5px; height: 4px; border: 1px solid #7a8896; }
.wb-close { background: linear-gradient(#e08a80, #d0493c); }
.win-body { flex: 1; display: flex; flex-direction: column; min-height: 0; background: #fff; border-top: 1px solid #8a8a8a; }
.canvas3d { flex: 1; min-height: 0; display: flex; overflow: hidden; }
.model { flex: 1; min-width: 0; height: 100%; display: block; }
.cube-t { font: 3.300px "Liberation Sans", sans-serif; fill: #9a9a9a; text-anchor: middle; }
.vscroll { flex: 0 0 6px; display: flex; flex-direction: column; align-items: center; background: #f1f1f1; font-size: 5px; line-height: 5px; color: #555; overflow: hidden; }
.vthumb { flex: 0 0 auto; width: 100%; background: #cdcdcd; }
.vthumb-3d { height: 9px; margin-top: 174px; }
.vthumb-s { height: 50px; margin-top: 181px; }
.dn { margin-top: auto; }
.viewbar { flex: 0 0 11px; display: flex; align-items: center; padding-left: 12px; background: #fafafa; font-size: 5.500px; color: #333; }
.scale { width: 27px; }
.vb-icons { display: flex; width: 132px; justify-content: space-between; }
.vi { width: 9px; height: 9px; }
.vi-small { width: 5px; }
.hs-arrow { flex: 0 0 7px; text-align: center; font-size: 7px; line-height: 7px; color: #333; }
.vb-track { flex: 1; height: 7px; padding-left: 70px; background: #f0f0f0; }
.vb-thumb { width: 8px; height: 7px; background: #cdcdcd; }

/* schedule */
.sched-body { flex: 1; min-height: 0; display: flex; flex-direction: column; background: #fff; border-top: 1px solid #777; }
.sched-main { flex: 1; min-height: 0; display: flex; overflow: hidden; }
.sched-table { flex: 1; min-width: 0; overflow: hidden; font-size: 5.100px; color: #555; }
.srow { height: 7.680px; display: grid; grid-template-columns: 45px repeat(8, 46px) 30px; border-bottom: 1px solid #c6c6c6; line-height: 7px; white-space: nowrap; }
.srow span { padding-left: 1.500px; border-right: 1px solid #c6c6c6; overflow: hidden; }
.shead { height: 6px; line-height: 4px; border-bottom-color: #b0b0b0; }
.srow .sel { padding-left: 0; }
.sel b { display: inline-block; font-weight: 400; padding: 0 1.500px; width: 19px; line-height: 7px; background: #3b8fe0; color: #d8ecff; }
.vscroll-s { flex: 0 0 6px; }
.hscroll { flex: 0 0 8px; display: flex; align-items: center; background: #f4f4f4; }
.hs-track { flex: 1; height: 7px; margin: 0 1px; background: #c8c8c8; }

/* status */
.status { flex: 0 0 11px; display: flex; align-items: center; background: linear-gradient(#f0f0f0, #e0e0e0); font-size: 5.600px; color: #333; }
.ready { flex: 0 0 466px; padding-left: 1px; }
.st-icon { width: 9px; height: 9px; flex: 0 0 9px; }
.st-first { margin: 0 2px 0 0; }
.st-combo { height: 9px; display: flex; align-items: center; justify-content: space-between; background: #fff; border: 1px solid #ddd; color: #888; padding-left: 1px; }
.st-wide { width: 98px; justify-content: flex-end; }
.st-gap { margin-left: 5px; }
.st-num { font-size: 5.500px; margin-left: 1px; }
.st-gap2 { margin-left: 11px; }
.st-gap3 { margin-left: 3px; }
.st-model { width: 74px; margin-left: 5px; }
.st-right { margin-left: auto; padding-right: 30px; display: flex; align-items: center; gap: 3px; }

/* taskbar */
.taskbar { flex: 0 0 19px; display: flex; align-items: stretch; background: #1b1e23; color: #ddd; }
.tb-start { flex: 0 0 23px; display: flex; align-items: center; justify-content: center; }
.tb-win { width: 9px; height: 9px; }
.tb-search { flex: 0 0 164.500px; display: flex; align-items: center; padding-left: 5px; background: #2c2c2c; font-size: 6.800px; color: #9a9a9a; }
.cortana { width: 10px; height: 10px; margin-right: 4px; border: 1.500px solid #e8e8e8; border-radius: 50%; }
.tb-mic { width: 9px; height: 9px; margin-left: auto; margin-right: 5px; }
.tb-item { flex: 0 0 23.530px; display: flex; align-items: center; justify-content: center; }
.tb-open { box-shadow: inset 0 -1px 0 #7ab4dd; }
.tb-active { background: #3c434c; box-shadow: inset 0 -1px 0 #7ab4dd; }
.tb-icon { width: 11px; height: 11px; }
.tb-edge { font: 700 15px/15px "Liberation Sans", sans-serif; color: #1780e0; margin-top: -3px; }
.tb-app { width: 11px; height: 10px; border: 1px solid; text-align: center; font-size: 6px; line-height: 8px; font-weight: 700; }
.tb-ai { color: #ff9a00; background: #2e1400; border-color: #d96a10; }
.tb-pr { color: #d9a0ff; background: #25092f; border-color: #9a5fc0; }
.tb-ps { color: #5ec0ff; background: #06202e; border-color: #2a8ac8; }
.tb-tile { width: 11px; height: 11px; text-align: center; font-size: 9px; line-height: 11px; font-weight: 700; background: #e8e8e8; }
.tb-r { color: #1f52b0; }
.tb-a { color: #c8202a; }
.tb-p { color: #fff; background: #d24726; }
.tb-tray { margin-left: auto; display: flex; align-items: center; gap: 3px; padding-right: 13px; padding-left: 0; }
.tray { width: 8px; height: 8px; flex: 0 0 8px; }
.clock { margin-left: 3px; width: 28px; display: flex; flex-direction: column; align-items: center; font-size: 5.200px; line-height: 7.500px; color: #ddd; }
```

FILE: app.js
```js
(function () {
  var first = [2.3, 2.2, 2.4, 2.5, 2.6, 2.6, 2.6, 2.5, 2.3, 2.2, 2.4, 2.2, 2.3, 2.2, 2.4];
  var cycle = [2.6, 2.6, 2.6, 2.5, 2.3, 2.2, 2.4, 2.2, 2.3, 2.2, 2.4, 2.5];
  var wrap = document.getElementById('rows');
  for (var r = 0; r < 47; r++) {
    var v;
    if (r === 15) v = '10.58';
    else if (r < 15) v = first[r].toFixed(2);
    else v = cycle[(r - 16) % 12].toFixed(2);
    var cell = r === 15 ? '<span class="sel"><b>10.5800</b></span>' : '<span>' + v + '</span>';
    var row = document.createElement('div');
    row.className = 'srow';
    row.innerHTML = cell + '<span>' + v + '</span><span></span><span>90.00°</span><span>90.00°</span><span>2.20</span><span></span><span>0.10</span><span></span><span>patio: patio</span>';
    wrap.appendChild(row);
  }
  var tail = document.createElement('div');
  tail.className = 'srow';
  tail.innerHTML = new Array(11).join('<span></span>');
  wrap.appendChild(tail);

  var NS = 'http://www.w3.org/2000/svg';
  var fins = document.getElementById('fins');
  var N = 56, h = 41.7;
  function line(d, color, width) {
    var p = document.createElementNS(NS, 'path');
    p.setAttribute('d', d);
    p.setAttribute('stroke', color);
    p.setAttribute('stroke-width', width);
    p.setAttribute('fill', 'none');
    fins.appendChild(p);
  }
  for (var i = N - 1; i >= 0; i--) {
    var w = 1 + 0.15 * Math.sin(2 * Math.PI * (i + 1) / 24);
    var shift = (w - 1) * 0.2;
    var lx = 201.7 + i * 3.3 - 32.5 * shift;
    var ly = 390 - i * 1.25 - 15.5 * shift;
    var fx = lx + 32.5 * w;
    var fy = ly + 15.5 * w;
    line('M' + lx + ' ' + ly + 'L' + fx + ' ' + fy + 'M' + lx + ' ' + (ly - h) + 'L' + fx + ' ' + (fy - h), '#303030', '1.300');
    line('M' + lx + ' ' + ly + 'V' + (ly - h), '#2a2a2a', '2');
    line('M' + fx + ' ' + fy + 'V' + (fy - h), '#222222', '2.800');
  }
})();
```
